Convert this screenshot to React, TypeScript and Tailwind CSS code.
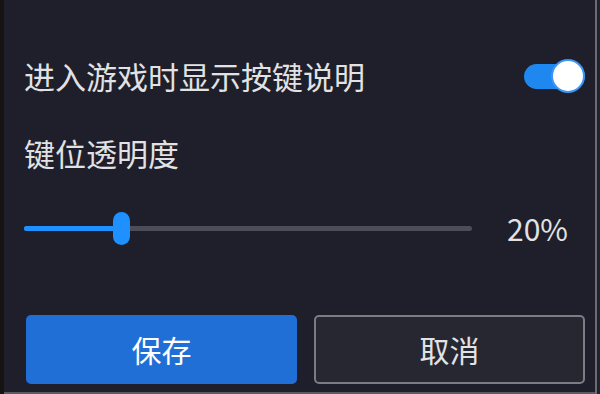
import React, { useState } from 'react';

const font = { fontFamily: '"Noto Sans CJK SC", "Noto Sans", sans-serif' };

export default function App() {
    const [shown, setShown] = useState(true);
    const [opacity] = useState(20);

    return (
        <div className="flex h-[394px] w-[600px] overflow-hidden bg-[#1e1f2a] text-[#e2e2e4]" style={font}>
            {/* left edge of the dialog */}
            <div className="w-[4px] shrink-0 bg-[#181313]" />
            <div className="flex flex-1 flex-col border-b-2 border-[#5a5c63] pl-[20px] pr-[10px] pt-[56px]">
                <div className="flex h-[40px] items-center justify-between">
                    <span className="text-[31px] leading-[40px]">进入游戏时显示按键说明</span>
                    <button
                        onClick={() => setShown(!shown)}
                        className="relative h-[25px] w-[61px] rounded-full bg-[#1e87f0]"
                    >
                        <span className="absolute right-0 top-[-5px] h-[34px] w-[34px] rounded-full border-2 border-[#3a95f5] bg-white" />
                    </button>
                </div>

                <div className="mt-[37px] text-[31px] leading-[40px]">键位透明度</div>

                <div className="mt-[39px] flex h-[32px] items-center">
                    <div className="relative h-[5px] w-[448px] rounded-full bg-[#4b4d58]">
                        <div className="absolute left-0 top-0 h-full rounded-full bg-[#1e90ff]" style={{ width: `${(opacity / 20) * 98}px` }} />
                        <div className="absolute left-[89px] top-[-14px] h-[33px] w-[17px] rounded-full bg-[#1e90ff]" />
                    </div>
                    <span className="ml-[35px] text-[30px] leading-[32px]">{opacity}%</span>
                </div>

                <div className="ml-[2px] mt-[71px] flex gap-[17px]">
                    <button className="h-[69px] w-[271px] rounded-[5px] bg-[#1f6fd6] text-[30px] text-white">保存</button>
                    <button className="h-[69px] w-[271px] rounded-[5px] border-2 border-[#7b7d85] bg-[#262731] text-[30px] text-[#e2e2e4]">
                        取消
                    </button>
                </div>
            </div>
            {/* right edge */}
            <div className="w-[6px] shrink-0 border-l-2 border-[#6a6c73] bg-[#22232d]" />
        </div>
    );
}
